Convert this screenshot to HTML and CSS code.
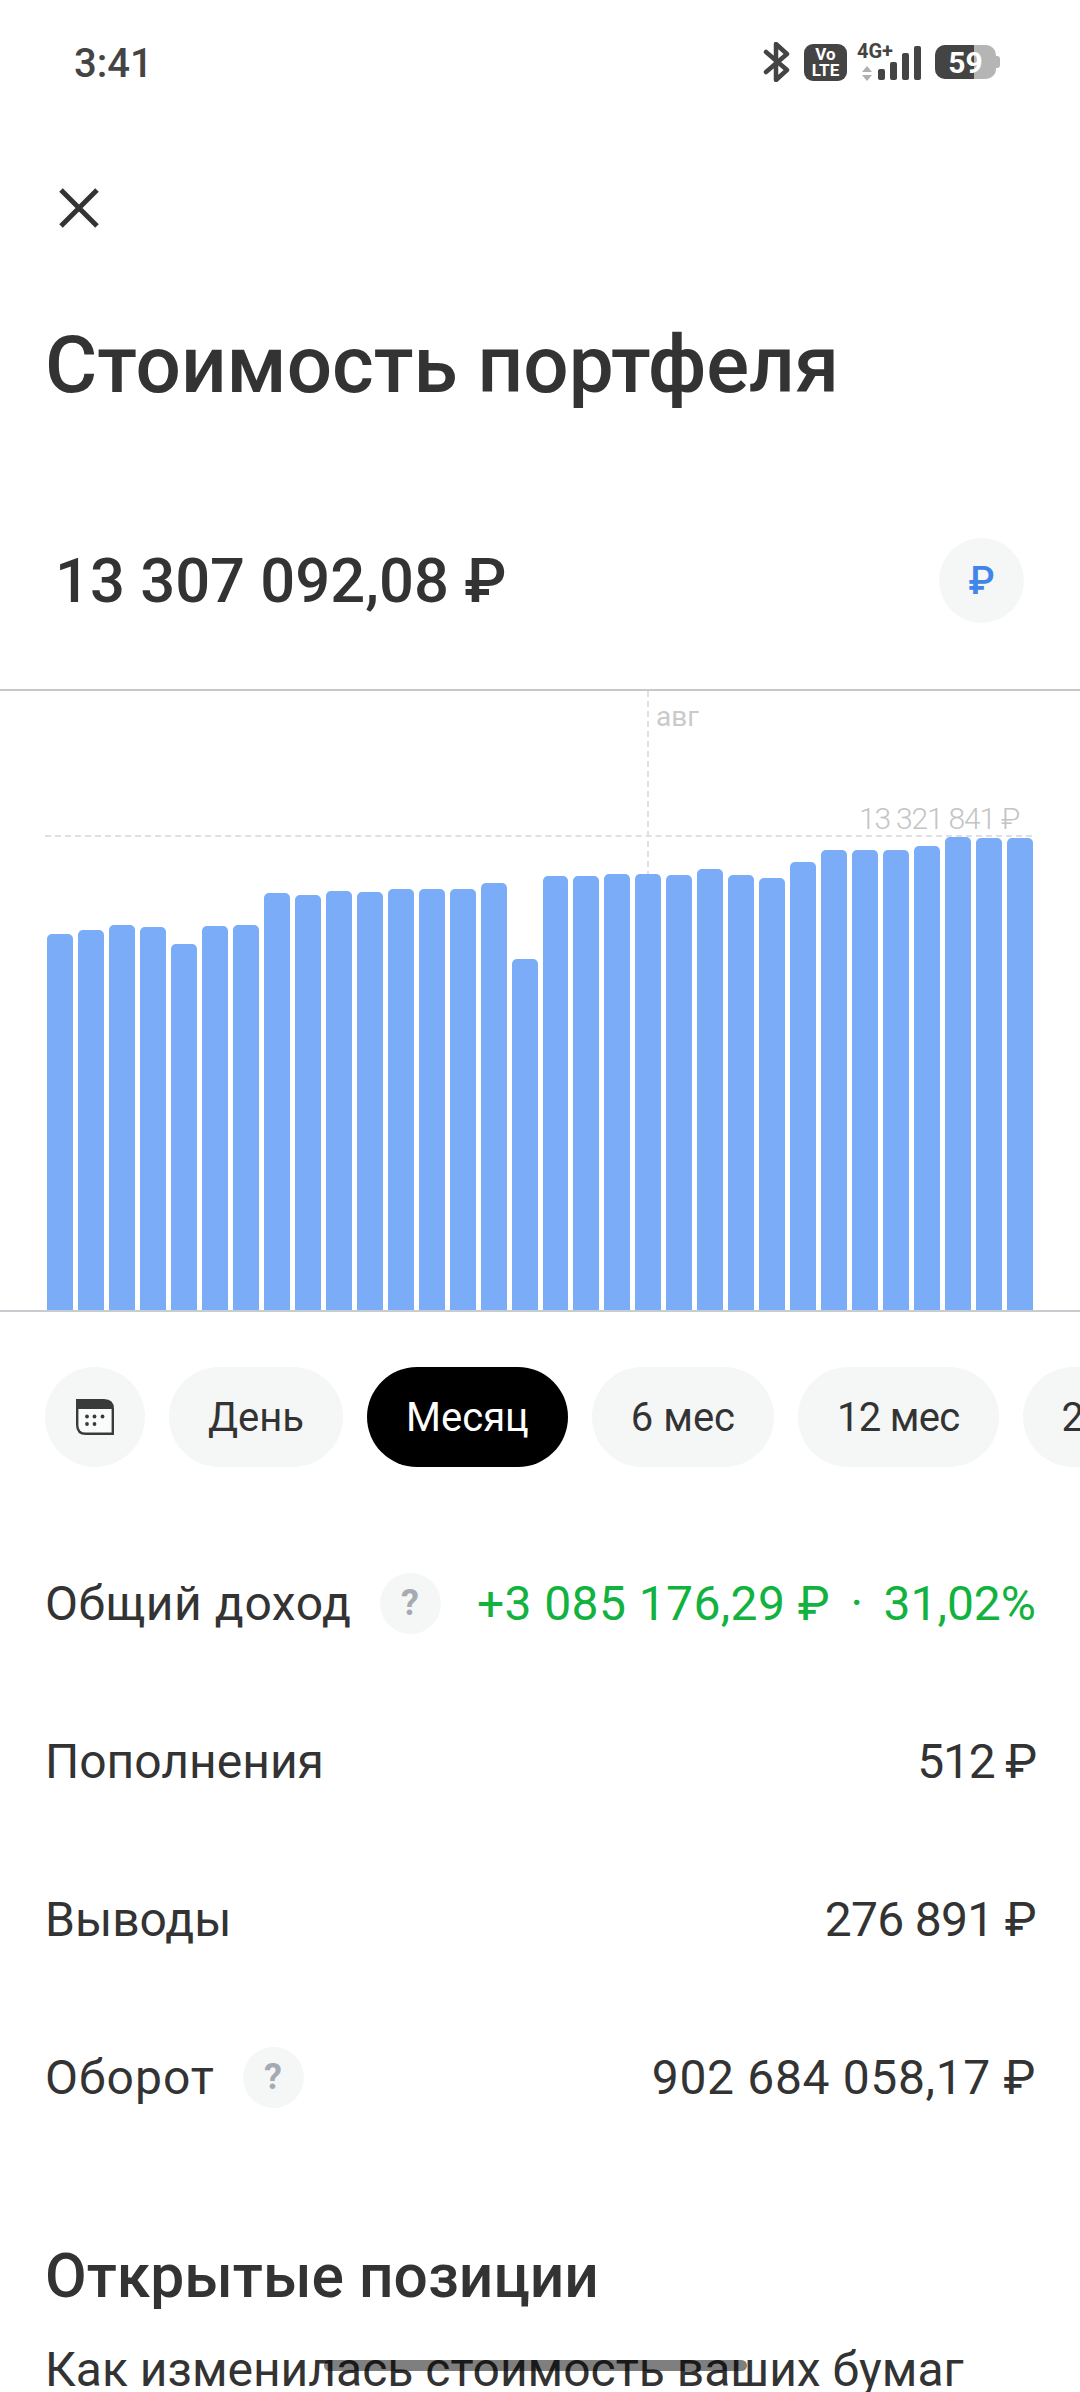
FILE: index.html
```html
<!DOCTYPE html>
<html lang="ru">
<head>
  <meta charset="UTF-8">
  <meta name="viewport" content="width=device-width, initial-scale=1.0">
  <title>Стоимость портфеля</title>
  <link rel="stylesheet" href="styles.css">
</head>
<body>

  <div class="status">
    <span class="time">3:41</span>
    <div class="status-icons">
      <svg class="bt" width="28" height="40" viewBox="0 0 28 40"><path d="M3 10 L24 28 L13 38 V2 L24 12 L3 30" fill="none" stroke="#444" stroke-width="4.5" stroke-linecap="round" stroke-linejoin="round"/></svg>
      <div class="volte"><span>Vo</span><span>LTE</span></div>
      <div class="net">
        <span class="net-label">4G+</span>
        <svg width="12" height="15" viewBox="0 0 12 15"><path d="M6 0 L11 6 H1 Z M1 9 H11 L6 15 Z" fill="#b0b0b0"/></svg>
      </div>
      <div class="signal">
        <i class="s1"></i><i class="s2"></i><i class="s3"></i><i class="s4"></i>
      </div>
      <div class="battery">
        <div class="battery-fill"></div>
        <span class="battery-text">59</span>
      </div>
    </div>
  </div>

  <div class="close">
    <svg width="40" height="40" viewBox="0 0 40 40"><path d="M2 2 L38 38 M38 2 L2 38" stroke="#333" stroke-width="5" fill="none"/></svg>
  </div>

  <h1 class="title">Стоимость портфеля</h1>

  <div class="amount">
    <span class="amount-value">13 307 092,08 ₽</span>
    <span class="currency">₽</span>
  </div>

  <div class="chart">
    <div class="line-v"></div>
    <span class="month">авг</span>
    <span class="max">13 321 841 ₽</span>
    <div class="line-h"></div>
    <div class="bars">
      <div class="bar" style="height:376px"></div>
      <div class="bar" style="height:380px"></div>
      <div class="bar" style="height:385px"></div>
      <div class="bar" style="height:383px"></div>
      <div class="bar" style="height:366px"></div>
      <div class="bar" style="height:384px"></div>
      <div class="bar" style="height:385px"></div>
      <div class="bar" style="height:417px"></div>
      <div class="bar" style="height:415px"></div>
      <div class="bar" style="height:419px"></div>
      <div class="bar" style="height:418px"></div>
      <div class="bar" style="height:421px"></div>
      <div class="bar" style="height:421px"></div>
      <div class="bar" style="height:421px"></div>
      <div class="bar" style="height:427px"></div>
      <div class="bar" style="height:351px"></div>
      <div class="bar" style="height:434px"></div>
      <div class="bar" style="height:434px"></div>
      <div class="bar" style="height:436px"></div>
      <div class="bar" style="height:436px"></div>
      <div class="bar" style="height:435px"></div>
      <div class="bar" style="height:441px"></div>
      <div class="bar" style="height:435px"></div>
      <div class="bar" style="height:432px"></div>
      <div class="bar" style="height:448px"></div>
      <div class="bar" style="height:460px"></div>
      <div class="bar" style="height:460px"></div>
      <div class="bar" style="height:460px"></div>
      <div class="bar" style="height:464px"></div>
      <div class="bar" style="height:473px"></div>
      <div class="bar" style="height:472px"></div>
      <div class="bar" style="height:472px"></div>
    </div>
  </div>

  <div class="ranges">
    <div class="pill pill-icon">
      <svg width="38" height="36" viewBox="0 0 38 36"><path d="M1.2 1.2 H28 Q36.8 1.2 36.8 10 V34.8 H10 Q1.2 34.8 1.2 26 Z" fill="#fafbfb" stroke="#3a3a3a" stroke-width="2.4"/><path d="M1 1 H28 Q37 1 37 10 H1 Z" fill="#3a3a3a"/><g fill="#3a3a3a"><circle cx="11" cy="17.5" r="1.9"/><circle cx="18.5" cy="17.5" r="1.9"/><circle cx="26.5" cy="17.5" r="1.9"/><circle cx="11" cy="25" r="1.9"/><circle cx="18.5" cy="25" r="1.9"/></g></svg>
    </div>
    <div class="pill">День</div>
    <div class="pill pill-active">Месяц</div>
    <div class="pill">6 мес</div>
    <div class="pill pill-narrow">12 мес</div>
    <div class="pill">24 мес</div>
  </div>

  <div class="row">
    <div class="row-label label-wide">Общий доход <span class="help">?</span></div>
    <div class="row-value green"><span class="wide-sm">+3 085 176,29 ₽</span><span class="dot">·</span>31,02%</div>
  </div>
  <div class="row">
    <div class="row-label">Пополнения</div>
    <div class="row-value tight">512 ₽</div>
  </div>
  <div class="row">
    <div class="row-label">Выводы</div>
    <div class="row-value tight-sm">276 891 ₽</div>
  </div>
  <div class="row">
    <div class="row-label label-wider">Оборот <span class="help">?</span></div>
    <div class="row-value wide">902 684 058,17 ₽</div>
  </div>

  <h2 class="section">Открытые позиции</h2>
  <p class="section-sub">Как изменилась стоимость ваших бумаг</p>

  <div class="home-bar"></div>

</body>
</html>
```

FILE: styles.css
```css
html, body {
  margin: 0;
  padding: 0;
}

body {
  width: 1080px;
  height: 2392px;
  overflow: hidden;
  position: relative;
  background: #fff;
  color: #333;
  font-family: Roboto, "Noto Sans", sans-serif;
}

/* status bar */
.status {
  height: 124px;
  padding: 0 84px 0 74px;
  display: flex;
  justify-content: space-between;
  align-items: center;
}

.time {
  padding-top: 2px;
  font-size: 40px;
  font-weight: 500;
  color: #444;
}

.status-icons {
  display: flex;
  align-items: center;
}

.bt {
  margin-right: 13px;
}

.volte {
  width: 43px;
  height: 37px;
  background: #444;
  border-radius: 9px;
  color: #fff;
  font-size: 17px;
  font-weight: 700;
  line-height: 16px;
  display: flex;
  flex-direction: column;
  align-items: center;
  justify-content: center;
}

.net {
  width: 40px;
  height: 38px;
  margin-left: 8px;
  display: flex;
  flex-direction: column;
  align-items: center;
  justify-content: space-between;
}

.net-label {
  font-size: 20px;
  font-weight: 700;
  line-height: 16px;
  color: #444;
}

.net svg {
  margin-right: 16px;
}

.signal {
  height: 34px;
  margin-left: -17px;
  display: flex;
  align-items: flex-end;
  gap: 5px;
  align-self: flex-end;
  padding-bottom: 2px;
}

.signal i {
  width: 7px;
  background: #444;
  border-radius: 2px;
}

.s1 { height: 11px; }
.s2 { height: 18px; }
.s3 { height: 27px; }
.s4 { height: 34px; }

.battery {
  width: 61px;
  height: 34px;
  margin-left: 14px;
  border-radius: 10px;
  background: #b5b5b5;
  position: relative;
  display: flex;
  align-items: center;
  justify-content: center;
}

.battery:after {
  content: "";
  position: absolute;
  right: -4px;
  top: 11px;
  width: 4px;
  height: 12px;
  border-radius: 0 3px 3px 0;
  background: #b5b5b5;
}

.battery-fill {
  position: absolute;
  left: 0;
  top: 0;
  bottom: 0;
  width: 39px;
  background: #444;
  border-radius: 10px 0 0 10px;
}

.battery-text {
  position: relative;
  font-size: 30px;
  font-weight: 700;
  color: #fff;
}

.close {
  margin-top: 64px;
  padding-left: 59px;
  height: 40px;
}

.close svg {
  display: block;
}

.title {
  margin: 87px 0 0;
  padding-left: 45px;
  font-size: 80px;
  line-height: 100px;
  font-weight: 500;
}

.amount {
  margin-top: 123px;
  height: 85px;
  padding: 0 56px 0 55px;
  display: flex;
  justify-content: space-between;
  align-items: center;
}

.amount-value {
  font-size: 61.5px;
  font-weight: 500;
}

.currency {
  width: 85px;
  height: 85px;
  border-radius: 50%;
  background: #f5f7f7;
  color: #3f86e8;
  font-size: 38px;
  font-weight: 500;
  display: flex;
  align-items: center;
  justify-content: center;
}

/* chart */
.chart {
  margin-top: 66px;
  height: 619px;
  border-top: 2px solid #c8c8c8;
  border-bottom: 2px solid #c8ccd0;
  position: relative;
}

.line-v {
  position: absolute;
  left: 647px;
  top: 0;
  height: 186px;
  border-left: 2px dashed #e0e0e0;
}

.line-h {
  position: absolute;
  left: 45px;
  width: 987px;
  top: 144px;
  border-top: 2px dashed #e0e0e0;
}

.month {
  position: absolute;
  left: 656px;
  top: 9px;
  font-size: 28px;
  color: #c8cacc;
}

.max {
  position: absolute;
  right: 61px;
  top: 110px;
  font-size: 30px;
  font-weight: 300;
  letter-spacing: -1.2px;
  color: #c4c4c4;
}

.bars {
  position: absolute;
  left: 47px;
  width: 986px;
  top: 0;
  bottom: 0;
  display: flex;
  align-items: flex-end;
  gap: 5px;
}

.bar {
  flex: 1;
  background: #7bacf7;
  border-radius: 5px 5px 0 0;
}

/* range pills */
.ranges {
  margin-top: 55px;
  padding-left: 45px;
  display: flex;
  gap: 24px;
  overflow: hidden;
}

.pill {
  flex: none;
  height: 100px;
  padding: 0 39px;
  border-radius: 50px;
  background: #f5f7f7;
  font-size: 40px;
  display: flex;
  align-items: center;
}

.pill-icon {
  width: 100px;
  padding: 0;
  justify-content: center;
}

.pill-active {
  background: #000;
  color: #fff;
}

.pill-narrow {
  letter-spacing: -0.7px;
}

/* rows */
.row {
  height: 158px;
  padding: 0 44px 0 45px;
  display: flex;
  justify-content: space-between;
  align-items: center;
  font-size: 48px;
}

.ranges + .row {
  margin-top: 57px;
}

.row-label {
  display: flex;
  align-items: center;
  gap: 28px;
}

.label-wide { letter-spacing: 0.6px; }
.label-wider { letter-spacing: 1px; }

.green {
  color: #12b23f;
}

.dot {
  margin: 0 20.5px;
}

.tight { letter-spacing: -1.2px; }
.tight-sm { letter-spacing: -0.7px; }
.wide { letter-spacing: 0.65px; }
.wide-sm { letter-spacing: 0.4px; }

.help {
  width: 61px;
  height: 61px;
  border-radius: 50%;
  background: #f5f7f7;
  color: #a6abb3;
  font-size: 36px;
  font-weight: 700;
  display: flex;
  align-items: center;
  justify-content: center;
}

.section {
  margin: 83px 0 0;
  padding-left: 45px;
  font-size: 60.5px;
  line-height: 76px;
  font-weight: 500;
}

.section-sub {
  margin: 25px 0 0;
  padding-left: 45px;
  font-size: 48px;
  line-height: 60px;
}

.home-bar {
  position: absolute;
  left: 324px;
  top: 2360px;
  width: 423px;
  height: 11px;
  border-radius: 6px;
  background: rgba(0, 0, 0, 0.5);
}
```
